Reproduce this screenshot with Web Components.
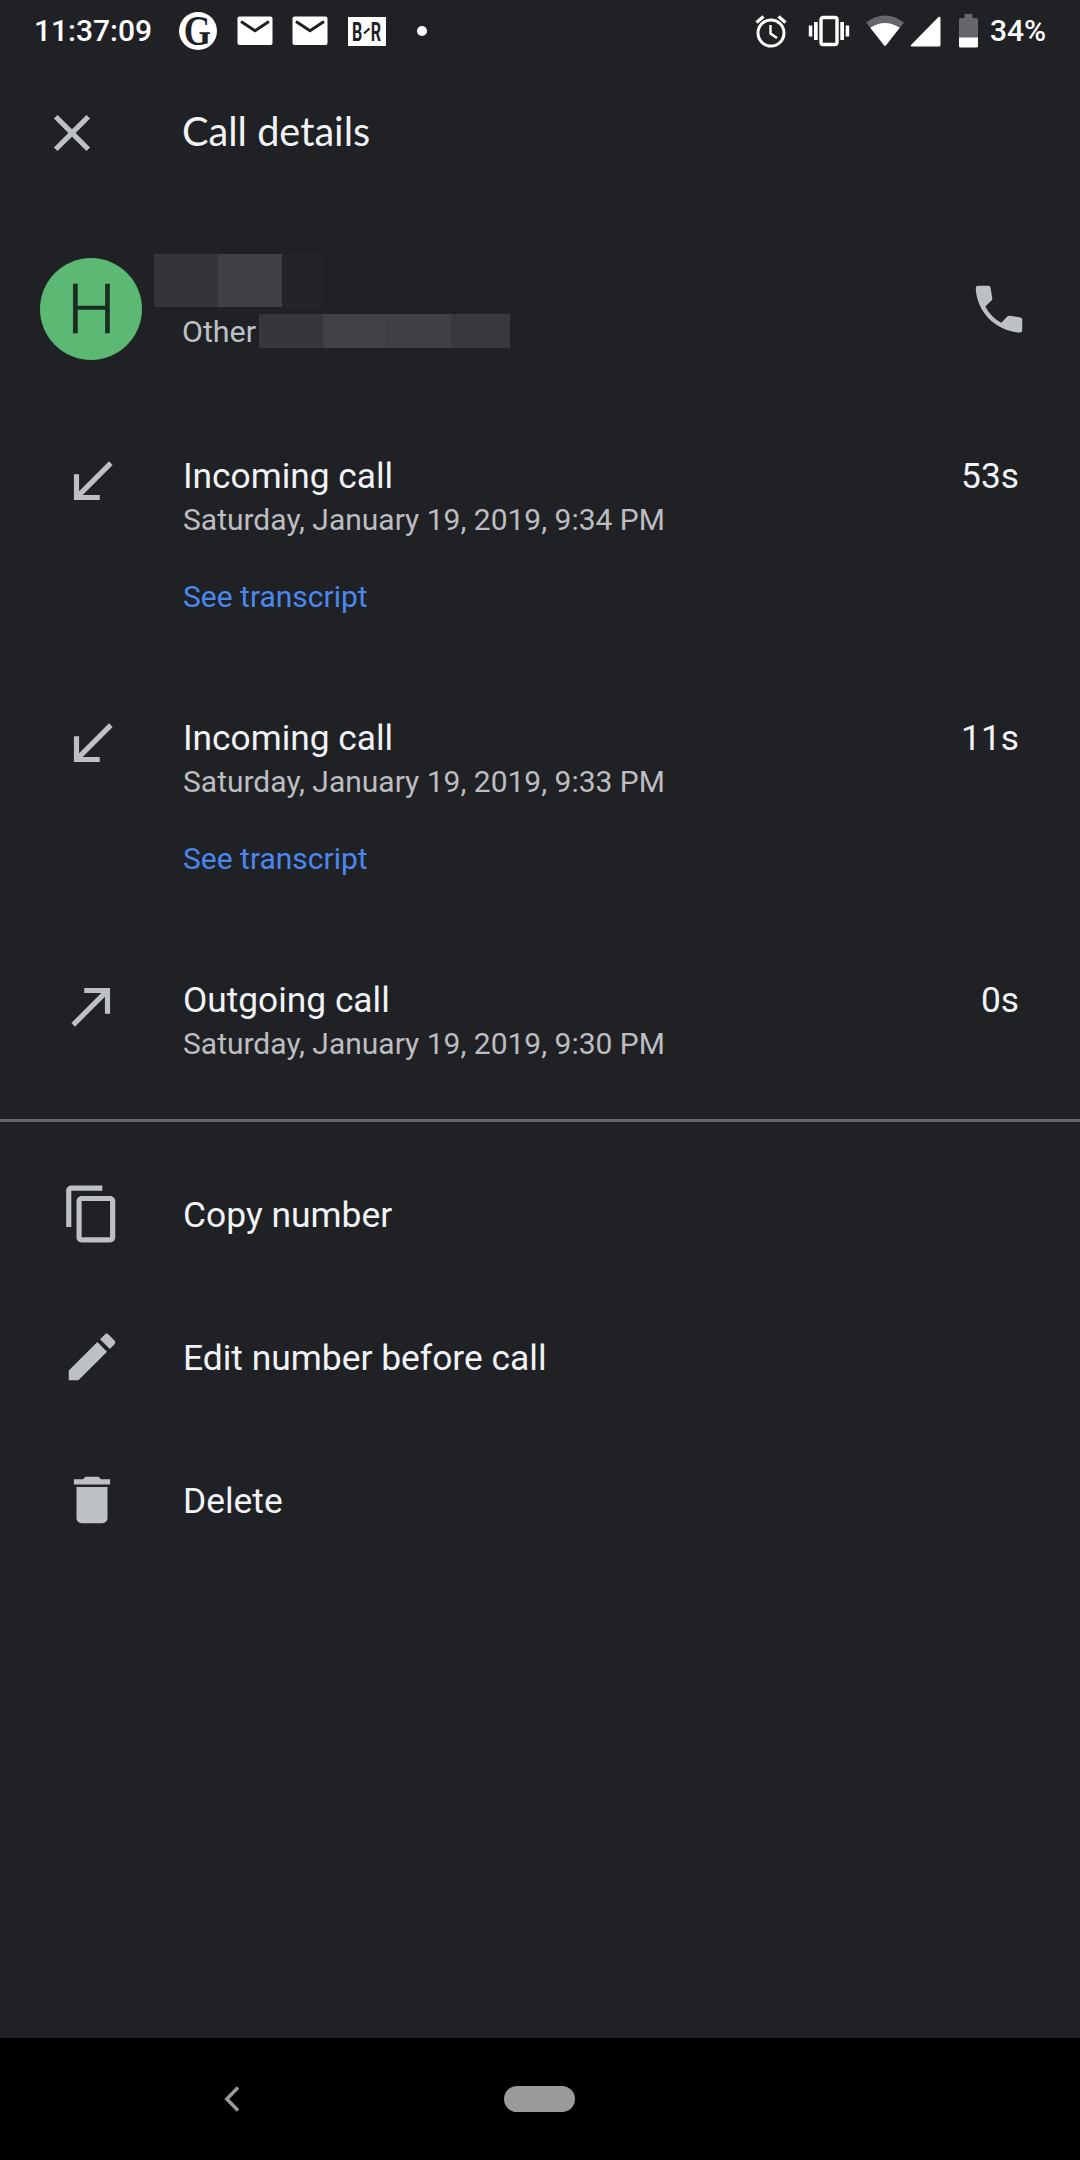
<!DOCTYPE html>
<html lang="en">
<head>
<meta charset="utf-8">
<title>Call details</title>
<style>
  body {
    margin: 0;
    background: #202124;
    color: #f1f3f6;
    font-family: Roboto, sans-serif;
  }
</style>
</head>
<body>
<call-screen>
  <status-bar slot="status" time="11:37:09" battery="34%"></status-bar>
  <app-header slot="header">Call details</app-header>
  <contact-row slot="contact" initial="H">Other</contact-row>
  <call-entry type="incoming" duration="53s" when="Saturday, January 19, 2019, 9:34 PM" transcript>Incoming call</call-entry>
  <call-entry type="incoming" duration="11s" when="Saturday, January 19, 2019, 9:33 PM" transcript>Incoming call</call-entry>
  <call-entry type="outgoing" duration="0s" when="Saturday, January 19, 2019, 9:30 PM">Outgoing call</call-entry>
  <menu-item slot="menu" icon="copy">Copy number</menu-item>
  <menu-item slot="menu" icon="edit">Edit number before call</menu-item>
  <menu-item slot="menu" icon="delete">Delete</menu-item>
  <nav-bar slot="nav"></nav-bar>
</call-screen>

<script>
const ICONS = {
  close: '<path d="M19 6.41 17.59 5 12 10.59 6.41 5 5 6.41 10.59 12 5 17.59 6.41 19 12 13.41 17.59 19 19 17.59 13.41 12z"/>',
  incoming: '<path d="M20 5.41 18.59 4 7 15.59V9H5v10h10v-2H8.41z"/>',
  outgoing: '<path d="M9 5v2h6.59L4 18.59 5.41 20 17 8.41V15h2V5z"/>',
  copy: '<path d="M16 1H4c-1.1 0-2 .9-2 2v14h2V3h12V1zm3 4H8c-1.1 0-2 .9-2 2v14c0 1.1.9 2 2 2h11c1.1 0 2-.9 2-2V7c0-1.1-.9-2-2-2zm0 16H8V7h11v14z"/>',
  edit: '<path d="M3 17.25V21h3.75L17.81 9.94l-3.75-3.75L3 17.25zM20.71 7.04a1 1 0 0 0 0-1.41l-2.34-2.34a1 1 0 0 0-1.41 0l-1.83 1.83 3.75 3.75 1.83-1.83z"/>',
  delete: '<path d="M6 19c0 1.1.9 2 2 2h8c1.1 0 2-.9 2-2V7H6v12zM19 4h-3.5l-1-1h-5l-1 1H5v2h14V4z"/>',
  phone: '<path d="M3.9 3h4.1q.6 0 .7.6l.7 4.3q.1.5-.3.8L6.7 11q2 4 6.2 6.3l2.3-2.4q.4-.4.9-.3l4.2.7q.7.1.7.8v4.1q0 .9-.9.9C10.8 20.7 3.3 13.2 3 3.9Q3 3 3.9 3z"/>'
};

class MdIcon extends HTMLElement {
  connectedCallback() {
    this.attachShadow({ mode: 'open' }).innerHTML = `
      <style>
        :host { display: block; width: 62px; height: 62px; color: #bdc1c6; }
        svg { display: block; width: 100%; height: 100%; fill: currentColor; }
      </style>
      <svg viewBox="0 0 24 24">${ICONS[this.getAttribute('name')]}</svg>
    `;
  }
}
customElements.define('md-icon', MdIcon);

class StatusBar extends HTMLElement {
  connectedCallback() {
    const mail = `
      <svg class="mail" width="36" height="30" viewBox="0 0 36 30">
        <rect x=".5" y=".5" width="35" height="28.5" rx="2" fill="#fff"/>
        <path d="M4 5.5 18 14.7 32 5.5" fill="none" stroke="#202124" stroke-width="3"/>
      </svg>`;
    this.attachShadow({ mode: 'open' }).innerHTML = `
      <style>
        :host { display: flex; align-items: center; height: 62px; box-sizing: border-box; padding: 0 34px; color: #fff; font-size: 30px; font-weight: 500; line-height: 62px; }
        svg { display: block; flex: none; overflow: visible; }
        .time { width: 145px; white-space: nowrap; }
        .left, .right { display: flex; align-items: center; }
        .left svg { margin-right: 19.5px; }
        .right { margin-left: auto; }
        .battery { width: 56px; text-align: right; white-space: nowrap; }
      </style>
      <span class="time">${this.getAttribute('time')}</span>
      <div class="left">
        <svg width="38" height="38" viewBox="0 0 38 38">
          <circle cx="19" cy="19" r="19" fill="#fff"/>
          <text transform="translate(18.2 33.4) scale(.82 1)" text-anchor="middle" font-family="Liberation Serif, serif" font-weight="700" font-size="42.5" fill="#202124">G</text>
        </svg>
        ${mail}${mail}
        <svg width="38" height="29" viewBox="0 0 38 29">
          <rect width="38" height="29" fill="#fff"/>
          <g font-family="Roboto, sans-serif" font-weight="700" font-size="26" fill="#202124">
            <text transform="translate(4 24) scale(.62 1)">B</text>
            <text transform="translate(22.8 24) scale(.62 1)">R</text>
          </g>
          <path d="M16 16.5 21.5 11.5" stroke="#202124" stroke-width="2.2"/>
        </svg>
        <svg width="10" height="10" viewBox="0 0 10 10" style="margin-left:12px"><circle cx="5" cy="5" r="5" fill="#fff"/></svg>
      </div>
      <div class="right">
        <svg width="32" height="34" viewBox="0 0 32 34" fill="none" stroke="#fff">
          <circle cx="16" cy="19" r="13" stroke-width="3"/>
          <path d="M15.5 11v8.5l6.5 4.5" stroke-width="2.4"/>
          <path d="M1.5 8.5 8.5 2.5M30.5 8.5 23.5 2.5" stroke-width="3.2"/>
        </svg>
        <svg width="42" height="32" viewBox="0 0 42 32" fill="#fff" style="margin-left:21px">
          <rect x="13" y="2.5" width="16" height="27" rx="2" fill="none" stroke="#fff" stroke-width="3.4"/>
          <path d="M.8 10.5h3.5v11H.8zM6 7h3.7v18H6zM32.3 7H36v18h-3.7zM37.7 10.5h3.5v11h-3.5z"/>
        </svg>
        <svg width="40" height="32" viewBox="0 0 40 32" style="margin-left:15px">
          <path d="M1 7.5Q20-6.5 39 7.5L21 30.3q-1 1-2 0z" fill="#66676a"/>
          <path d="M5.3 12.8Q20 3.2 34.7 12.8L21 30.3q-1 1-2 0z" fill="#fff"/>
        </svg>
        <svg width="31" height="31" viewBox="0 0 31 31" style="margin-left:5px">
          <path d="M30.5 2v27q0 1.5-1.5 1.5H1.5q-1.5-.2-.5-1.5L28.5 1q1.8-1 2 1z" fill="#fff"/>
        </svg>
        <svg width="19" height="34" viewBox="0 0 19 34" style="margin-left:18.5px">
          <path d="M5.5 0h8v4H17.5q1.5 0 1.5 1.5V24H0V5.5Q0 4 1.5 4h4z" fill="#66676a"/>
          <path d="M0 23.5h19v8.5q0 1.5-1.5 1.5h-16Q0 33.5 0 32z" fill="#fff"/>
        </svg>
        <span class="battery" style="margin-left:12px">${this.getAttribute('battery')}</span>
      </div>
    `;
  }
}
customElements.define('status-bar', StatusBar);

class AppHeader extends HTMLElement {
  connectedCallback() {
    this.attachShadow({ mode: 'open' }).innerHTML = `
      <style>
        :host { display: flex; align-items: center; height: 141px; padding-left: 41px; }
        h1 { margin: 0 0 3px 79px; font: 400 39.7px/48px Lato, sans-serif; }
      </style>
      <md-icon name="close"></md-icon>
      <h1><slot></slot></h1>
    `;
  }
}
customElements.define('app-header', AppHeader);

class ContactRow extends HTMLElement {
  connectedCallback() {
    this.attachShadow({ mode: 'open' }).innerHTML = `
      <style>
        :host { display: flex; height: 213px; padding: 0 50px 0 40px; box-sizing: border-box; }
        .avatar { width: 102px; height: 102px; margin-top: 55px; border-radius: 50%; background: #5bb974; color: #1b2b22; font-size: 69px; font-weight: 300; line-height: 104px; text-align: center; text-indent: 1px; -webkit-text-stroke: .6px #1b2b22; }
        .info { flex: 1; padding: 51px 0 0 12px; }
        .hidden { display: flex; }
        .name { height: 53px; }
        .number { height: 34px; margin-left: auto; }
        .line { display: flex; width: 328px; margin: 7px 0 0 28px; color: #bdc1c6; font-size: 30.4px; line-height: 35px; }
        md-icon { margin-top: 75px; }
      </style>
      <div class="avatar">${this.getAttribute('initial')}</div>
      <div class="info">
        <div class="hidden name">
          <i style="width:64px;background:#343539"></i><i style="width:64px;background:#3f4043"></i><i style="width:40px;background:#232427"></i>
        </div>
        <div class="line">
          <span><slot></slot></span>
          <div class="hidden number">
            <i style="width:64px;background:#36373a"></i><i style="width:62px;background:#414246"></i><i style="width:66px;background:#3f4043"></i><i style="width:59px;background:#38393c"></i>
          </div>
        </div>
      </div>
      <md-icon name="phone"></md-icon>
    `;
  }
}
customElements.define('contact-row', ContactRow);

class CallEntry extends HTMLElement {
  connectedCallback() {
    const link = this.hasAttribute('transcript') ? '<a>See transcript</a>' : '';
    this.attachShadow({ mode: 'open' }).innerHTML = `
      <style>
        :host { display: flex; height: 262px; padding: 38px 61px 0 60.5px; box-sizing: border-box; }
        :host([type="outgoing"]) { height: 179px; }
        md-icon { margin-top: -3px; }
        .body { flex: 1; margin-left: 60.5px; }
        .title, .duration { font-size: 35.3px; line-height: 44px; }
        .when { color: #bdbdc1; font-size: 30px; line-height: 43px; }
        a { display: block; margin-top: 35px; color: #4a87ee; font-size: 30px; line-height: 42px; }
      </style>
      <md-icon name="${this.getAttribute('type')}"></md-icon>
      <div class="body">
        <div class="title"><slot></slot></div>
        <div class="when">${this.getAttribute('when')}</div>
        ${link}
      </div>
      <div class="duration">${this.getAttribute('duration')}</div>
    `;
  }
}
customElements.define('call-entry', CallEntry);

class MenuItem extends HTMLElement {
  connectedCallback() {
    this.attachShadow({ mode: 'open' }).innerHTML = `
      <style>
        :host { display: flex; align-items: center; height: 143px; padding-left: 60.5px; }
        .label { margin-left: 60.5px; padding-top: 3px; font-size: 35.4px; line-height: 44px; }
      </style>
      <md-icon name="${this.getAttribute('icon')}"></md-icon>
      <span class="label"><slot></slot></span>
    `;
  }
}
customElements.define('menu-item', MenuItem);

class NavBar extends HTMLElement {
  connectedCallback() {
    this.attachShadow({ mode: 'open' }).innerHTML = `
      <style>
        :host { display: flex; align-items: center; height: 122px; background: #000; }
        svg { margin-left: 224px; }
        .pill { width: 71px; height: 26px; margin-left: 264px; border-radius: 13px; background: #9a9a9a; }
      </style>
      <svg width="16" height="26" viewBox="0 0 16 26" fill="none" stroke="#9a9a9a" stroke-width="3.5"><path d="M14 1.5 2.8 13 14 24.5"/></svg>
      <div class="pill"></div>
    `;
  }
}
customElements.define('nav-bar', NavBar);

class CallScreen extends HTMLElement {
  connectedCallback() {
    this.attachShadow({ mode: 'open' }).innerHTML = `
      <style>
        :host { display: flex; flex-direction: column; width: 1080px; height: 2160px; }
        .menu { flex: 1; padding-top: 20px; border-top: 3px solid #646568; }
      </style>
      <slot name="status"></slot>
      <slot name="header"></slot>
      <slot name="contact"></slot>
      <slot></slot>
      <div class="menu"><slot name="menu"></slot></div>
      <slot name="nav"></slot>
    `;
  }
}
customElements.define('call-screen', CallScreen);
</script>
</body>
</html>
